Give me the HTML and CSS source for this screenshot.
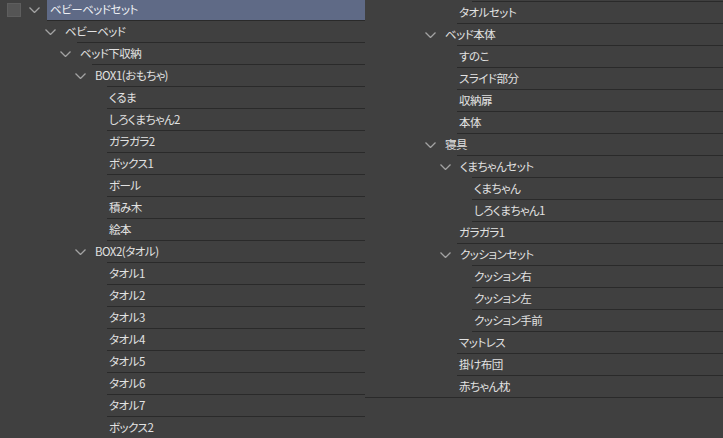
FILE: index.html
```html
<!DOCTYPE html>
<html lang="ja">
<head>
<meta charset="utf-8">
<link rel="stylesheet" href="styles.css">
</head>
<body>
<div class="panel">
  <div class="col left">
    <div class="root">
      <span class="check"></span>
      <svg class="tw" width="11" height="6" viewBox="0 0 11 6"><polyline points="0.5,0.5 5.5,5.5 10.5,0.5"/></svg>
      <span class="sel">ベビーベッドセット</span>
    </div>
    <div class="row open l1"><svg class="tw" width="11" height="6" viewBox="0 0 11 6"><polyline points="0.5,0.5 5.5,5.5 10.5,0.5"/></svg><span class="t">ベビーベッド</span></div>
    <div class="row open l2"><svg class="tw" width="11" height="6" viewBox="0 0 11 6"><polyline points="0.5,0.5 5.5,5.5 10.5,0.5"/></svg><span class="t">ベッド下収納</span></div>
    <div class="row open l3"><svg class="tw" width="11" height="6" viewBox="0 0 11 6"><polyline points="0.5,0.5 5.5,5.5 10.5,0.5"/></svg><span class="t">BOX1(おもちゃ)</span></div>
    <div class="row leaf l4"><span class="t">くるま</span></div>
    <div class="row leaf l4"><span class="t">しろくまちゃん2</span></div>
    <div class="row leaf l4"><span class="t">ガラガラ2</span></div>
    <div class="row leaf l4"><span class="t">ボックス1</span></div>
    <div class="row leaf l4"><span class="t">ボール</span></div>
    <div class="row leaf l4"><span class="t">積み木</span></div>
    <div class="row leaf l4"><span class="t">絵本</span></div>
    <div class="row open l3"><svg class="tw" width="11" height="6" viewBox="0 0 11 6"><polyline points="0.5,0.5 5.5,5.5 10.5,0.5"/></svg><span class="t">BOX2(タオル)</span></div>
    <div class="row leaf l4"><span class="t">タオル1</span></div>
    <div class="row leaf l4"><span class="t">タオル2</span></div>
    <div class="row leaf l4"><span class="t">タオル3</span></div>
    <div class="row leaf l4"><span class="t">タオル4</span></div>
    <div class="row leaf l4"><span class="t">タオル5</span></div>
    <div class="row leaf l4"><span class="t">タオル6</span></div>
    <div class="row leaf l4"><span class="t">タオル7</span></div>
    <div class="row leaf l4"><span class="t">ボックス2</span></div>
  </div>
  <div class="col right">
    <div class="stub leaf l4"></div>
    <div class="row leaf l3"><span class="t">タオルセット</span></div>
    <div class="row open l2"><svg class="tw" width="11" height="6" viewBox="0 0 11 6"><polyline points="0.5,0.5 5.5,5.5 10.5,0.5"/></svg><span class="t">ベッド本体</span></div>
    <div class="row leaf l3"><span class="t">すのこ</span></div>
    <div class="row leaf l3"><span class="t">スライド部分</span></div>
    <div class="row leaf l3"><span class="t">収納扉</span></div>
    <div class="row leaf l3"><span class="t">本体</span></div>
    <div class="row open l2"><svg class="tw" width="11" height="6" viewBox="0 0 11 6"><polyline points="0.5,0.5 5.5,5.5 10.5,0.5"/></svg><span class="t">寝具</span></div>
    <div class="row open l3"><svg class="tw" width="11" height="6" viewBox="0 0 11 6"><polyline points="0.5,0.5 5.5,5.5 10.5,0.5"/></svg><span class="t">くまちゃんセット</span></div>
    <div class="row leaf l4"><span class="t">くまちゃん</span></div>
    <div class="row leaf l4"><span class="t">しろくまちゃん1</span></div>
    <div class="row leaf l3"><span class="t">ガラガラ1</span></div>
    <div class="row open l3"><svg class="tw" width="11" height="6" viewBox="0 0 11 6"><polyline points="0.5,0.5 5.5,5.5 10.5,0.5"/></svg><span class="t">クッションセット</span></div>
    <div class="row leaf l4"><span class="t">クッション右</span></div>
    <div class="row leaf l4"><span class="t">クッション左</span></div>
    <div class="row leaf l4"><span class="t">クッション手前</span></div>
    <div class="row leaf l3"><span class="t">マットレス</span></div>
    <div class="row leaf l3"><span class="t">掛け布団</span></div>
    <div class="row leaf l3 last"><span class="t">赤ちゃん枕</span></div>
  </div>
</div>
</body>
</html>
```

FILE: styles.css
```css
html, body {
  margin: 0;
  padding: 0;
  background: #404040;
  overflow: hidden;
}

.panel {
  display: flex;
  width: 723px;
  height: 438px;
  overflow: hidden;
  font-family: "Noto Sans CJK JP", "Noto Sans", sans-serif;
  font-size: 11.5px;
  letter-spacing: -0.5px;
  font-feature-settings: "palt";
  color: #e2e2e2;
}

.col {
  display: flex;
  flex-direction: column;
}

.left {
  width: 365px;
  flex: none;
}

.right {
  width: 358px;
  flex: none;
}

.root {
  display: flex;
  align-items: center;
  height: 21px;
  padding-left: 7px;
}

.check {
  width: 12px;
  height: 12px;
  margin-top: -2px;
  background: #555555;
  border: 1px solid #5e5e5e;
  margin-right: 8px;
  flex: none;
}

.tw {
  flex: none;
  fill: none;
  stroke: #a3a3a3;
  stroke-width: 1.3;
}

.root .tw {
  margin-right: 7px;
  margin-top: -2px;
}

.sel {
  flex: 1;
  height: 21px;
  box-sizing: border-box;
  border-bottom: 1px solid #2a2a2a;
  background: #5f6a86;
  padding-left: 3px;
  line-height: 19px;
  color: #eef0f4;
}

.row {
  display: flex;
  align-items: center;
  height: 22px;
  box-sizing: border-box;
  border-bottom: 1px solid #2a2a2a;
  white-space: nowrap;
}

.t {
  line-height: 21px;
}

.leaf .t {
  padding-left: 2px;
}

.open .tw {
  margin-left: -32px;
  margin-right: 8px;
}

.open .t {
  margin-left: 1px;
}

/* border start: leaf = 47 + 15*level, open = 62 + 15*level */
.leaf.l3 { margin-left: 92px; }
.leaf.l4 { margin-left: 107px; }
.open.l1 { margin-left: 77px; }
.open.l2 { margin-left: 92px; }
.open.l3 { margin-left: 107px; }

.stub {
  height: 2px;
  box-sizing: border-box;
  border-bottom: 1px solid #2a2a2a;
  flex: none;
}

.row.last {
  margin-left: 0;
  padding-left: 92px;
}
```
